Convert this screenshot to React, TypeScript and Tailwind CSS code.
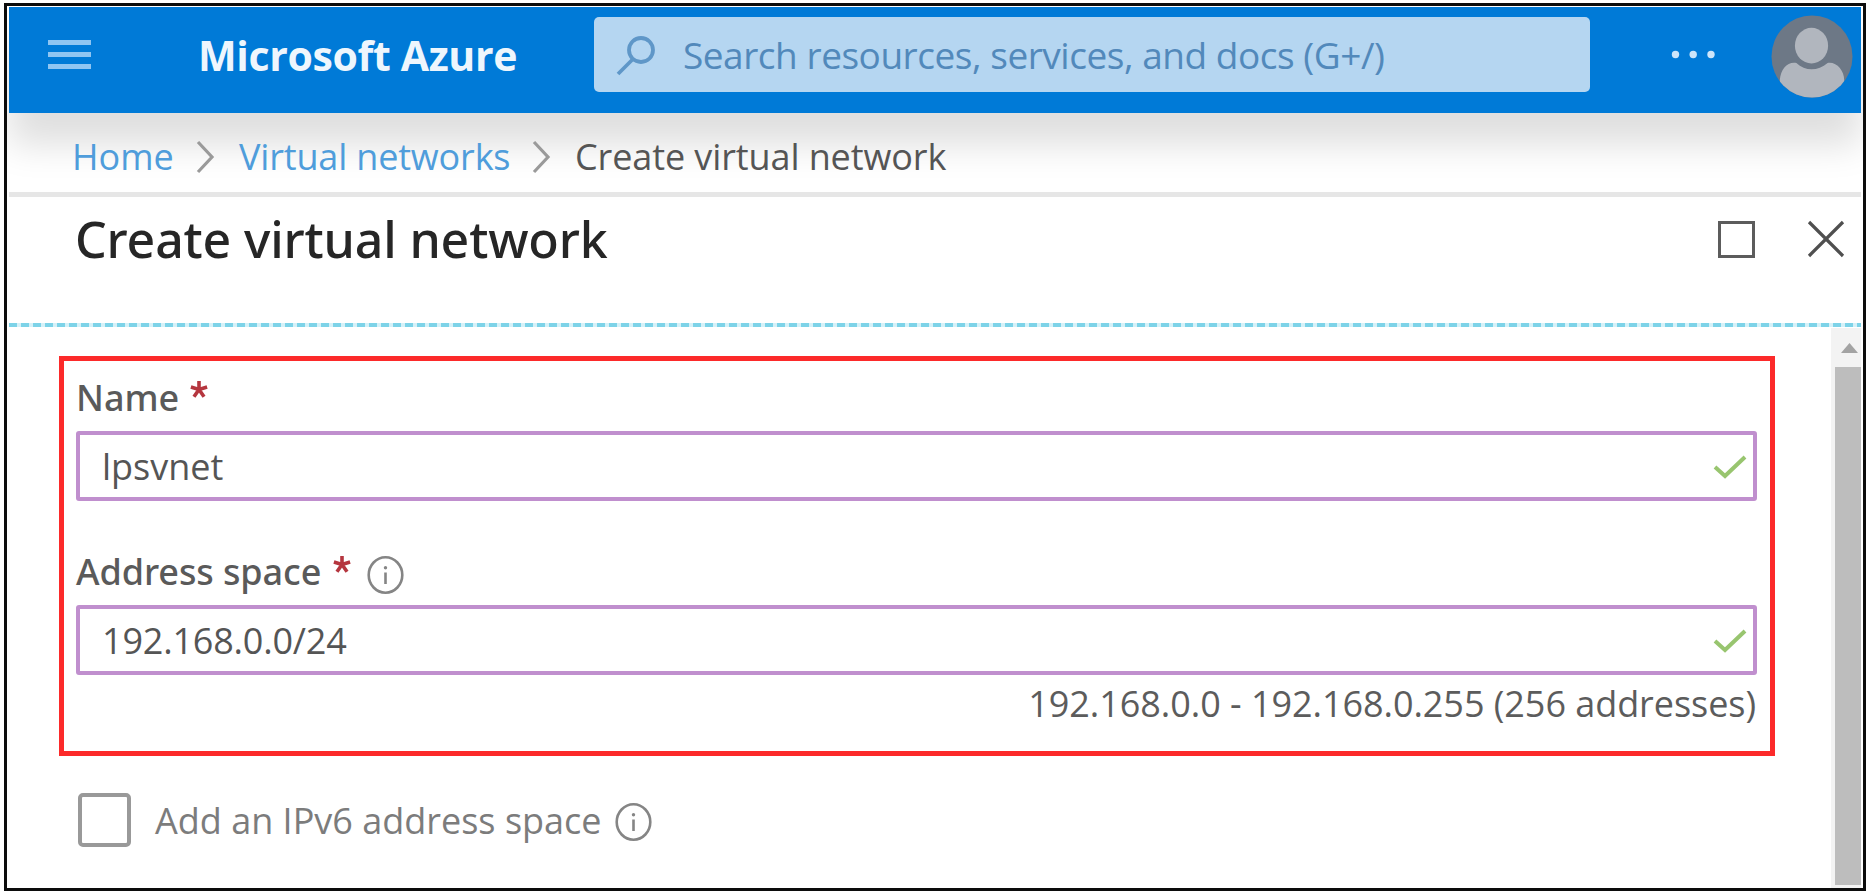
import type { ReactNode } from "react";

function Chevron() {
  return (
    <svg width="19" height="34" viewBox="0 0 19 34" fill="none" stroke="#9a9a9a" strokeWidth="3.2">
      <path d="M2 2 L16 17 L2 32" />
    </svg>
  );
}

function InfoIcon() {
  return (
    <svg width="38" height="40" viewBox="0 0 38 40" fill="none" stroke="#858585">
      <ellipse cx="18.5" cy="20" rx="16.8" ry="17.7" strokeWidth="2.6" />
      <path d="M18.5 17.5 V29" strokeWidth="2.6" />
      <circle cx="18.5" cy="12.8" r="1.7" fill="#858585" stroke="none" />
    </svg>
  );
}

function Check() {
  return (
    <svg width="34" height="26" viewBox="0 0 34 26" fill="none" stroke="#98c56f" strokeWidth="4">
      <path d="M2 13 L12 22 L32 3" />
    </svg>
  );
}

function Asterisk() {
  return (
    <svg width="18" height="19" viewBox="0 0 20 20" stroke="#b5363f" strokeWidth="4">
      <path d="M10 10 V0.5 M10 10 L1 7.2 M10 10 L19 7.2 M10 10 L4.4 18 M10 10 L15.6 18" />
    </svg>
  );
}

function Field({ children }: { children: ReactNode }) {
  return (
    <div className="flex h-[70px] items-center justify-between rounded-[3px] border-4 border-[#c08fce] pt-[2px] pr-[6px] pl-[22px] text-[36px] text-[#555555]">
      {children}
      <Check />
    </div>
  );
}

function TopBar() {
  return (
    <header className="relative z-0 flex h-[106px] shrink-0 items-center bg-[#007ad7] pb-[11px] shadow-[0_32px_36px_rgba(0,0,0,0.13)]">
      <div className="ml-[39px] flex w-[43px] flex-col gap-[7px]">
        <span className="h-[5px] bg-[#8fc5f2]" />
        <span className="h-[5px] bg-[#8fc5f2]" />
        <span className="h-[5px] bg-[#8fc5f2]" />
      </div>
      <div className="mt-px ml-[107px] w-[396px] text-[41px] leading-none font-bold tracking-[-0.36px] whitespace-nowrap text-[#eef6fd]">
        Microsoft Azure
      </div>
      <div className="flex h-[75px] w-[996px] items-center rounded-[5px] bg-[#b5d6f1] pl-[22px]">
        <svg width="40" height="44" viewBox="0 0 40 44" fill="none" stroke="#5f97c8" strokeWidth="3.8">
          <circle cx="25" cy="17" r="12" />
          <path d="M17 26 L2 41" />
        </svg>
        <span className="ml-[27px] text-[37px] leading-none tracking-[-0.47px] text-[#5289bb]">
          Search resources, services, and docs (G+/)
        </span>
      </div>
      <svg className="ml-[81px]" width="44" height="10" viewBox="0 0 44 10" fill="#cde5fa">
        <circle cx="4.5" cy="4.5" r="3.7" />
        <circle cx="22.2" cy="4.5" r="3.7" />
        <circle cx="40" cy="4.5" r="3.7" />
      </svg>
      <svg className="mt-[3px] ml-[56px]" width="82" height="83" viewBox="0 0 84 84" preserveAspectRatio="none">
        <defs>
          <clipPath id="avatar">
            <circle cx="42" cy="42" r="41.5" />
          </clipPath>
        </defs>
        <g clipPath="url(#avatar)">
          <rect width="84" height="84" fill="#6d7886" />
          <ellipse cx="41.5" cy="31" rx="17" ry="18" fill="#b1b6be" />
          <path d="M9 66 C10 54 17 47 26 48.5 C35 57 48 57 58 48.5 C67 47 75 56 75 66 V84 H9 Z" fill="#b1b6be" />
        </g>
      </svg>
    </header>
  );
}

function Breadcrumb() {
  return (
    <nav className="relative z-10 flex h-[78px] shrink-0 items-center pt-[9px] pl-[63px] leading-none">
      <span className="w-[124px] text-[36px] text-[#4f9ddb]">Home</span>
      <Chevron />
      <span className="ml-[24px] w-[293px] text-[36px] tracking-[-0.17px] text-[#4f9ddb]">Virtual networks</span>
      <Chevron />
      <span className="ml-[24px] text-[36px] tracking-[-0.1px] text-[#555555]">Create virtual network</span>
    </nav>
  );
}

export default function App() {
  return (
    <div className="h-[894px] w-[1869px] bg-white pt-[3px] pr-[3px] pb-[3px] pl-[4px] font-['Open_Sans',sans-serif]">
      <div className="flex h-full flex-col overflow-hidden border-[3px] border-[#0c0c0c] px-[2px] pt-px">
        <TopBar />
        <Breadcrumb />
        <div className="mt-px h-[5px] shrink-0 bg-[#e6e6e6]" />
        <div className="flex h-[84px] shrink-0 items-center pr-[16px] pl-[66px]">
          <h1 className="grow font-['Noto_Sans',sans-serif] text-[50px] leading-none font-medium tracking-[-0.15px] text-[#262626]">
            Create virtual network
          </h1>
          <div className="h-[37px] w-[37px] border-[3px] border-[#5c5c5c]" />
          <svg className="ml-[52px]" width="38" height="38" viewBox="0 0 38 38" stroke="#4f4f4f" strokeWidth="3.2">
            <path d="M2 2 L36 36 M36 2 L2 36" />
          </svg>
        </div>
        <div className="mt-[42px] mb-px h-[4px] shrink-0 bg-[repeating-linear-gradient(90deg,#7dd3e8_0_8px,#d5f1f8_8px_12px)]" />
        <div className="flex min-h-0 grow">
          <main className="grow">
            <section className="mt-[28px] ml-[50px] flex h-[400px] w-[1716px] flex-col border-[5px] border-[#fc2a2a] pr-[13px] pl-[12px]">
              <div className="flex h-[70px] shrink-0 items-center pt-[4px] font-['Noto_Sans',sans-serif] text-[36px] font-medium text-[#5a5a5a]">
                Name
                <span className="-mt-[18px] ml-[11px]">
                  <Asterisk />
                </span>
              </div>
              <Field>lpsvnet</Field>
              <div className="flex h-[104px] shrink-0 items-center pt-[38px] font-['Noto_Sans',sans-serif] text-[36px] font-medium tracking-[-0.1px] text-[#5a5a5a]">
                Address space
                <span className="-mt-[16px] mr-[16px] ml-[12px]">
                  <Asterisk />
                </span>
                <span className="mt-[6px]">
                  <InfoIcon />
                </span>
              </div>
              <Field>
                <span className="tracking-[-0.2px]">192.168.0.0/24</span>
              </Field>
              <div className="pr-px text-right text-[36px] leading-[58px] tracking-[-0.05px] text-[#5c5c5c]">
                192.168.0.0 - 192.168.0.255 (256 addresses)
              </div>
            </section>
            <div className="mt-[37px] ml-[69px] flex h-[54px] items-center">
              <div className="h-[54px] w-[53px] rounded-[5px] border-4 border-[#999999]" />
              <span className="mt-[2px] ml-[24px] text-[36px] leading-none text-[#7c7c7c]">Add an IPv6 address space</span>
              <span className="mt-[3px] ml-[13px]">
                <InfoIcon />
              </span>
            </div>
          </main>
          <div className="flex w-[30px] shrink-0 flex-col items-end bg-[#f3f3f3]">
            <div className="flex h-[39px] w-full items-center justify-center pl-[6px]">
              <svg width="17" height="10" viewBox="0 0 17 10" fill="#a3a3a3">
                <path d="M8.5 0 L17 10 H0 Z" />
              </svg>
            </div>
            <div className="mb-[3px] w-[26px] grow bg-[#bdbdbd]" />
          </div>
        </div>
      </div>
    </div>
  );
}
